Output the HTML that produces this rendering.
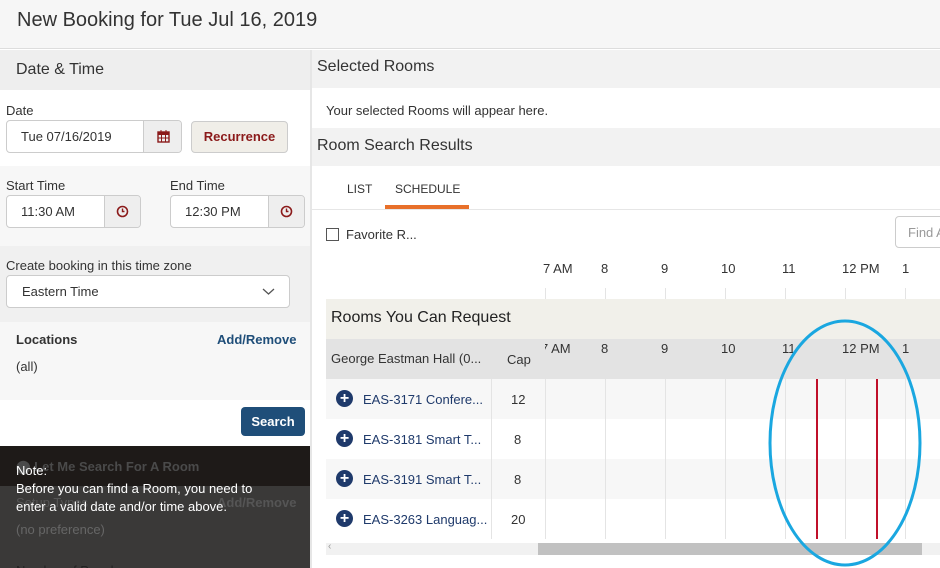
<!DOCTYPE html>
<html><head><meta charset="utf-8"><style>
*{box-sizing:border-box;margin:0;padding:0}
body{width:940px;height:568px;overflow:hidden;background:#fff;font-family:"Liberation Sans",sans-serif;color:#333;position:relative;font-size:13px}
.a{position:absolute}
.inp{position:absolute;border:1px solid #ccc;border-radius:4px;background:#fff;font-size:13px;color:#333;overflow:hidden}
.btn{position:absolute;background:#eee;border-left:1px solid #ccc;top:0;bottom:0;display:flex;align-items:center;justify-content:center;color:#8b1a1a}
.lbl{position:absolute;font-size:13px;color:#333}
.vl{position:absolute;width:1px;background:#e4e4e4}
</style></head><body>
<div class="a" style="left:0;top:0;width:940px;height:49px;background:#f6f6f6;border-bottom:1px solid #ddd"></div>
<div class="a" style="left:17px;top:9px;font-size:20px;color:#333">New Booking for Tue Jul 16, 2019</div>
<!-- left -->
<div class="a" style="left:0;top:50px;width:310px;height:40px;background:#eee"></div>
<div class="a" style="left:16px;top:61px;font-size:16px">Date &amp; Time</div>
<div class="a" style="left:0;top:166px;width:310px;height:80px;background:#f7f7f7"></div>
<div class="a" style="left:0;top:246px;width:310px;height:76px;background:#f0f0f0"></div>
<div class="a" style="left:0;top:322px;width:310px;height:78px;background:#f7f7f7"></div>
<div class="a" style="left:310px;top:50px;width:2px;height:518px;background:#e6e6e6"></div>
<div class="lbl" style="left:6px;top:103px">Date</div>
<div class="inp" style="left:6px;top:120px;width:176px;height:33px"><span class="a" style="left:14px;top:8px">Tue 07/16/2019</span><div class="btn" style="left:136px;width:39px">
<svg width="13" height="13" viewBox="0 0 13 13"><rect x="1" y="2" width="11" height="10" fill="none" stroke="#8b1a1a" stroke-width="1.4"/><rect x="1" y="2" width="11" height="3" fill="#8b1a1a"/><path d="M4 0v3M9 0v3M1 8h11M4.5 5v7M8.5 5v7" stroke="#8b1a1a"/></svg></div></div>
<div class="a" style="left:191px;top:121px;width:97px;height:32px;background:#f0eee8;border:1px solid #ccc;border-radius:4px;color:#8b1a1a;font-weight:bold;font-size:13px;text-align:center;line-height:30px">Recurrence</div>
<div class="lbl" style="left:6px;top:178px">Start Time</div>
<div class="lbl" style="left:170px;top:178px">End Time</div>
<div class="inp" style="left:6px;top:195px;width:135px;height:33px"><span class="a" style="left:14px;top:8px">11:30 AM</span><div class="btn" style="left:97px;right:0"><svg width="13" height="13"><circle cx="6.5" cy="6.5" r="5" fill="none" stroke="#8b1a1a" stroke-width="1.6"/><path d="M6.5 3.5v3h2" fill="none" stroke="#8b1a1a" stroke-width="1.4"/></svg></div></div>
<div class="inp" style="left:170px;top:195px;width:135px;height:33px"><span class="a" style="left:14px;top:8px">12:30 PM</span><div class="btn" style="left:97px;right:0"><svg width="13" height="13"><circle cx="6.5" cy="6.5" r="5" fill="none" stroke="#8b1a1a" stroke-width="1.6"/><path d="M6.5 3.5v3h2" fill="none" stroke="#8b1a1a" stroke-width="1.4"/></svg></div></div>
<div class="lbl" style="left:6px;top:258px">Create booking in this time zone</div>
<div class="inp" style="left:6px;top:275px;width:284px;height:33px"><span class="a" style="left:15px;top:8px">Eastern Time</span><svg class="a" style="left:255px;top:11px" width="13" height="9"><path d="M1 2l5.5 5 5.5-5" fill="none" stroke="#555" stroke-width="1.3"/></svg></div>
<div class="a" style="left:16px;top:332px;font-weight:bold;font-size:13px">Locations</div>
<div class="a" style="left:217px;top:332px;font-weight:bold;color:#1f4e79">Add/Remove</div>
<div class="a" style="left:16px;top:359px">(all)</div>
<div class="a" style="left:241px;top:407px;width:64px;height:29px;background:#1f4e79;border-radius:4px;color:#fff;font-weight:bold;text-align:center;line-height:29px">Search</div>
<div class="a" style="left:0;top:446px;width:310px;height:122px;background:#3a3938;overflow:hidden">
<div class="a" style="left:0;top:0;width:310px;height:40px;background:#1e1a18"></div>
<div class="a" style="left:16px;top:13px;color:#4a4a4a;font-weight:bold">⬤ Let Me Search For A Room</div>
<div class="a" style="left:16px;top:49px;color:#555">Setup Types</div>
<div class="a" style="left:217px;top:49px;color:#555;font-weight:bold">Add/Remove</div>
<div class="a" style="left:16px;top:76px;color:#666">(no preference)</div>
<div class="a" style="left:16px;top:117px;color:#222">Number of People</div>
<div class="a" style="left:16px;top:16px;color:#fff;line-height:18px">Note:<br>Before you can find a Room, you need to<br>enter a valid date and/or time above.</div>
</div>
<!-- right -->
<div class="a" style="left:312px;top:50px;width:628px;height:38px;background:#f2f2f2"></div>
<div class="a" style="left:317px;top:58px;font-size:16px">Selected Rooms</div>
<div class="a" style="left:326px;top:103px">Your selected Rooms will appear here.</div>
<div class="a" style="left:312px;top:128px;width:628px;height:38px;background:#f2f2f2"></div>
<div class="a" style="left:317px;top:137px;font-size:16px">Room Search Results</div>
<div class="a" style="left:347px;top:182px;font-size:12px">LIST</div>
<div class="a" style="left:395px;top:182px;font-size:12px">SCHEDULE</div>
<div class="a" style="left:312px;top:209px;width:628px;height:1px;background:#e6e6e6"></div>
<div class="a" style="left:385px;top:205px;width:84px;height:4px;background:#e8702a"></div>
<div class="a" style="left:326px;top:228px;width:13px;height:13px;border:1px solid #555"></div>
<div class="a" style="left:346px;top:227px">Favorite R...</div>
<div class="a" style="left:895px;top:216px;width:60px;height:32px;border:1px solid #ccc;border-radius:4px;color:#999;padding:8px 12px;white-space:nowrap">Find A</div>
<div class="a" style="left:326px;top:299px;width:614px;height:40px;background:#f1f0ea"></div>
<div class="a" style="left:331px;top:309px;font-size:16px;color:#222">Rooms You Can Request</div>
<div class="a" style="left:326px;top:339px;width:614px;height:40px;background:#e3e3e3"></div>
<div class="a" style="left:326px;top:379px;width:614px;height:40px;background:#f7f7f7"></div>
<div class="a" style="left:326px;top:459px;width:614px;height:40px;background:#f7f7f7"></div>
<div class="a" style="left:331px;top:351px">George Eastman Hall (0...</div>
<div class="a" style="left:507px;top:352px">Cap</div>
<div class="vl" style="left:491px;top:379px;height:160px"></div>
<div class="vl" style="left:545px;top:288px;height:11px"></div><div class="vl" style="left:545px;top:379px;height:160px"></div>
<div class="vl" style="left:605px;top:288px;height:11px"></div><div class="vl" style="left:605px;top:379px;height:160px"></div>
<div class="vl" style="left:665px;top:288px;height:11px"></div><div class="vl" style="left:665px;top:379px;height:160px"></div>
<div class="vl" style="left:725px;top:288px;height:11px"></div><div class="vl" style="left:725px;top:379px;height:160px"></div>
<div class="vl" style="left:785px;top:288px;height:11px"></div><div class="vl" style="left:785px;top:379px;height:160px"></div>
<div class="vl" style="left:845px;top:288px;height:11px"></div><div class="vl" style="left:845px;top:379px;height:160px"></div>
<div class="vl" style="left:905px;top:288px;height:11px"></div><div class="vl" style="left:905px;top:379px;height:160px"></div>
<div class="a" style="top:261px;left:543px">7 AM</div><div class="a" style="top:261px;left:601px">8</div><div class="a" style="top:261px;left:661px">9</div><div class="a" style="top:261px;left:721px">10</div><div class="a" style="top:261px;left:782px">11</div><div class="a" style="top:261px;left:842px">12 PM</div><div class="a" style="top:261px;left:902px">1</div>
<div class="a" style="top:341px;left:545px;width:30px;overflow:hidden"><span style="margin-left:-4px">7 AM</span></div><div class="a" style="top:341px;left:601px">8</div><div class="a" style="top:341px;left:661px">9</div><div class="a" style="top:341px;left:721px">10</div><div class="a" style="top:341px;left:782px">11</div><div class="a" style="top:341px;left:842px">12 PM</div><div class="a" style="top:341px;left:902px">1</div>
<div class="a" style="left:336px;top:390px;width:17px;height:17px;border-radius:50%;background:#1f3a6b;color:#fff;font-weight:bold;font-size:16px;line-height:17px;text-align:center">+</div>
<div class="a" style="left:336px;top:430px;width:17px;height:17px;border-radius:50%;background:#1f3a6b;color:#fff;font-weight:bold;font-size:16px;line-height:17px;text-align:center">+</div>
<div class="a" style="left:336px;top:470px;width:17px;height:17px;border-radius:50%;background:#1f3a6b;color:#fff;font-weight:bold;font-size:16px;line-height:17px;text-align:center">+</div>
<div class="a" style="left:336px;top:510px;width:17px;height:17px;border-radius:50%;background:#1f3a6b;color:#fff;font-weight:bold;font-size:16px;line-height:17px;text-align:center">+</div>
<div class="a" style="left:363px;top:392px;color:#1f3a6b">EAS-3171 Confere...</div><div class="a" style="left:511px;top:392px">12</div>
<div class="a" style="left:363px;top:432px;color:#1f3a6b">EAS-3181 Smart T...</div><div class="a" style="left:514px;top:432px">8</div>
<div class="a" style="left:363px;top:472px;color:#1f3a6b">EAS-3191 Smart T...</div><div class="a" style="left:514px;top:472px">8</div>
<div class="a" style="left:363px;top:512px;color:#1f3a6b">EAS-3263 Languag...</div><div class="a" style="left:511px;top:512px">20</div>
<div class="a" style="left:816px;top:379px;width:2px;height:160px;background:#c0102a"></div>
<div class="a" style="left:876px;top:379px;width:2px;height:160px;background:#c0102a"></div>
<div class="a" style="left:326px;top:543px;width:614px;height:12px;background:#f1f1f1"></div>
<div class="a" style="left:538px;top:543px;width:384px;height:12px;background:#c1c1c1"></div>
<div class="a" style="left:328px;top:541px;font-size:10px;color:#999">‹</div>
<svg class="a" style="left:0;top:0" width="940" height="568"><ellipse cx="845" cy="443" rx="75" ry="122" fill="none" stroke="#1aa7e0" stroke-width="3"/></svg>
</body></html>
